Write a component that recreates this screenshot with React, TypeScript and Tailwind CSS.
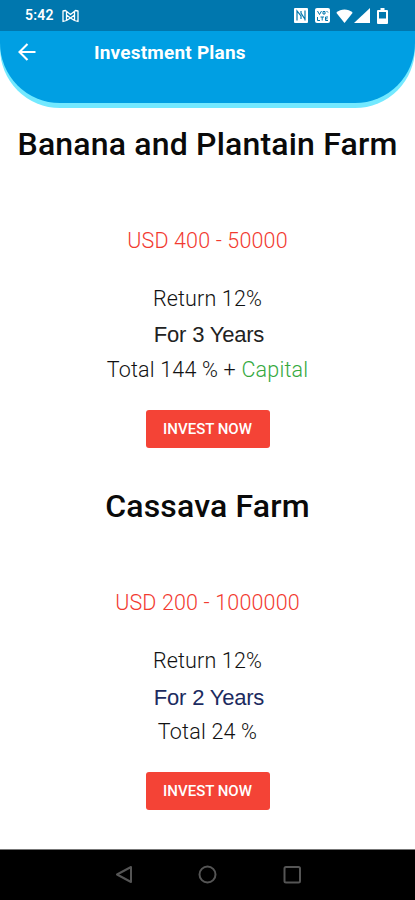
import React from 'react';

interface Plan {
  name: string;
  range: string;
  returns: string;
  duration: string;
  durationClass: string;
  total: string;
  capital?: string;
}

const plans: Plan[] = [
  {
    name: 'Banana and Plantain Farm',
    range: 'USD 400 - 50000',
    returns: 'Return 12%',
    duration: 'For 3 Years',
    durationClass: 'text-[#222222]',
    total: 'Total 144 % +',
    capital: 'Capital',
  },
  {
    name: 'Cassava Farm',
    range: 'USD 200 - 1000000',
    returns: 'Return 12%',
    duration: 'For 2 Years',
    durationClass: 'text-[#1c2b60] pt-px',
    total: 'Total 24 %',
  },
];

const StatusBar: React.FC = () => (
  <div className="flex h-[31px] items-center bg-[#0077ae] pl-[25px] pr-[27px] text-white">
    <span className="text-[14px] font-semibold leading-[31px] tracking-[0.2px]">5:42</span>
    <svg className="ml-[8px]" width="17" height="14" viewBox="0 0 17 14" fill="none" stroke="currentColor" strokeWidth="1.3" strokeLinejoin="round">
      <path d="M1 2 L3.5 1.5 L8.5 5.5 L13.5 1.5 L16 2 V12.5 L12.5 11.5 L8.5 9 L4.5 11.5 L1 12.5 Z M4.5 3 V11 M12.5 3 V11 M4.5 6 L8.5 9 L12.5 6" />
    </svg>
    <div className="ml-auto flex items-center">
      {/* NFC */}
      <svg width="14" height="15" viewBox="0 0 14 15">
        <rect width="14" height="15" rx="1" fill="white" />
        <path d="M3 12.5 V3 L7 8 V11 M11 12.5 V2.5 M7 3 V5 L10.8 11" fill="none" stroke="#0077ae" strokeWidth="1.2" />
      </svg>
      {/* VoLTE */}
      <svg className="ml-[7px]" width="15" height="15" viewBox="0 0 15 15">
        <rect width="15" height="15" rx="2" fill="white" />
        <path d="M2.5 3 L4.5 6.5 L6.5 3 M8 3.5 H10 V6 H8 Z M11.5 3 L13 4.5 M2.5 9 V12.5 H5 M5.5 9 H9 M7.2 9 V12.5 M13 9 H10.5 V12.5 H13 M10.5 10.8 H12.5" fill="none" stroke="#0077ae" strokeWidth="1" />
      </svg>
      {/* Wifi */}
      <svg className="ml-[6px]" width="17" height="14" viewBox="0 0 17 14" fill="white">
        <path d="M8.5 14 L0.3 3.7 C5 -0.6 12 -0.6 16.7 3.7 Z" />
      </svg>
      {/* Signal */}
      <svg className="ml-px" width="16" height="15" viewBox="0 0 16 15" fill="white">
        <path d="M0 15 L16 0 V15 Z" />
      </svg>
      {/* Battery */}
      <svg className="ml-[7px]" width="11" height="16" viewBox="0 0 11 16">
        <path d="M3.5 0 H7.5 V2 H10 Q11 2 11 3 V15 Q11 16 10 16 H1 Q0 16 0 15 V3 Q0 2 1 2 H3.5 Z M2 4 V10.5 H9 V4 Z" fill="white" fillRule="evenodd" />
      </svg>
    </div>
  </div>
);

const Header: React.FC = () => (
  <header className="flex h-[71.5px] items-start rounded-b-[60px] bg-[#009fe3] pl-[18px] pt-[11px] text-white shadow-[0_5px_0_0_#73e9ff]">
    <svg width="18" height="20" viewBox="0 0 18 20" fill="none" stroke="currentColor" strokeWidth="2.1">
      <path d="M17.5 10 H2 M9.5 2 L1.5 10 L9.5 18" />
    </svg>
    <h1 className="ml-[58px] pt-px text-[19px] font-bold leading-[20px] tracking-[0.2px]">Investment Plans</h1>
  </header>
);

const PlanCard: React.FC<{ plan: Plan }> = ({ plan }) => (
  <section className="flex h-[362px] flex-col items-center whitespace-nowrap text-[21.5px] font-light text-[#111111]">
    <h2 className="text-[32px] font-medium leading-[40px] tracking-[0.18px] text-[#0a0a0a]">{plan.name}</h2>
    <p className="mt-[62px] leading-[30px] tracking-[0.15px] text-[#f23a30]">{plan.range}</p>
    <p className="mt-[28px] leading-[30px] tracking-[0.15px]">{plan.returns}</p>
    <p className={`mt-[6px] h-[30px] pl-[3px] font-['Liberation_Sans',sans-serif] text-[22px] font-normal leading-[30px] tracking-[-0.2px] ${plan.durationClass}`}>
      {plan.duration}
    </p>
    <p className="mt-[5px] leading-[30px] tracking-[0.2px]">
      {plan.total}
      {plan.capital && <span className="text-[#35a93e]"> {plan.capital}</span>}
    </p>
    <button className="mt-[25px] h-[38px] w-[124px] rounded-[3px] bg-[#f44336] text-[15px] font-medium text-white">
      INVEST NOW
    </button>
  </section>
);

const NavBar: React.FC = () => (
  <nav className="h-[51px] border-t border-[#777777] bg-black">
    <svg width="415" height="50" viewBox="0 0 415 50" fill="none" stroke="#555555" strokeWidth="2" strokeLinejoin="round">
      <path d="M117 24.5 L131 17 V32 Z" />
      <circle cx="207.5" cy="24.5" r="8" />
      <rect x="284.5" y="17" width="15.5" height="15.5" rx="1.5" />
    </svg>
  </nav>
);

export default function App() {
  return (
    <div className="flex h-[900px] w-[415px] flex-col overflow-hidden bg-white font-['Roboto',sans-serif]">
      <StatusBar />
      <Header />
      <main className="flex-1 pt-[21.5px]">
        {plans.map((plan) => (
          <PlanCard key={plan.name} plan={plan} />
        ))}
      </main>
      <NavBar />
    </div>
  );
}
